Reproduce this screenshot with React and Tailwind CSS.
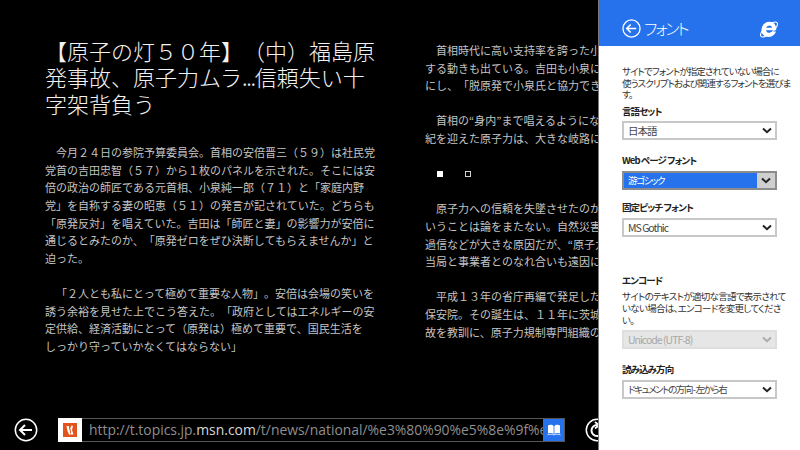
import React from 'react';

const jp = "font-['Noto_Sans_CJK_JP','Noto_Sans',sans-serif]";
// meiryo ui is narrow, proportional kana gets close to it
const palt = "[font-feature-settings:'palt']";

const col1 = [
  ['　今月２４日の参院予算委員会。首相の安倍晋三（５９）は社民党', '党首の吉田忠智（５７）から１枚のパネルを示された。そこには安', '倍の政治の師匠である元首相、小泉純一郎（７１）と「家庭内野', '党」を自称する妻の昭恵（５１）の発言が記されていた。どちらも', '「原発反対」を唱えていた。吉田は「師匠と妻」の影響力が安倍に', '通じるとみたのか、「原発ゼロをぜひ決断してもらえませんか」と', '迫った。'],
  ['　「２人とも私にとって極めて重要な人物」。安倍は会場の笑いを', '誘う余裕を見せた上でこう答えた。「政府としてはエネルギーの安', '定供給、経済活動にとって（原発は）極めて重要で、国民生活を', 'しっかり守っていかなくてはならない」'],
];

const col2Top = [
  ['　首相時代に高い支持率を誇った小泉', 'する動きも出ている。吉田も小泉に面', 'にし、「脱原発で小泉氏と協力できな'],
  ['　首相の“身内”まで唱えるようになっ', '紀を迎えた原子力は、大きな岐路に立'],
];

const col2Bottom = [
  ['　原子力への信頼を失墜させたのか。', 'いうことは論をまたない。自然災害へ', '過信などが大きな原因だが、“原子力', '当局と事業者とのなれ合いも遠因に'],
  ['　平成１３年の省庁再編で発足した原', '保安院。その誕生は、１１年に茨城県', '故を教訓に、原子力規制専門組織の'],
];

function Paragraphs({ items }) {
  return items.map((lines, i) => (
    <div key={i} className="mb-[17.6px]">
      {lines.map((l) => (
        <div key={l} className="whitespace-nowrap">{l}</div>
      ))}
    </div>
  ));
}

function Chevron({ color = '#222' }) {
  return (
    <svg width="10" height="7" viewBox="0 0 10 7">
      <path d="M1 1.5 L5 5.2 L9 1.5" fill="none" stroke={color} strokeWidth="2" />
    </svg>
  );
}

function Select({ value, active, disabled, tight }) {
  const size = tight ? 'text-[9.5px] tracking-[-1.4px]' : 'text-[10.5px] tracking-[-1px]';
  if (active) {
    return (
      <div className={`h-[19px] flex border-2 border-[#8c8c8c] bg-[#2672ec] text-white ${size}`}>
        <div className="flex-1 pl-[4px] leading-[15px]">{value}</div>
        <div className="w-[18px] bg-[#cfcfcf] flex items-center justify-center"><Chevron /></div>
      </div>
    );
  }
  return (
    <div className={`h-[19px] flex items-center justify-between pl-[4px] pr-[3px] border-2 whitespace-nowrap ${size} ${disabled ? 'border-[#dedede] bg-[#e6e6e6] text-[#a8a8a8]' : 'border-[#c8c8c8] bg-white text-[#444]'}`}>
      <span>{value}</span>
      <Chevron color={disabled ? '#aaa' : '#222'} />
    </div>
  );
}

function Label({ children, className = '' }) {
  return <div className={`text-[9.5px] tracking-[-0.9px] leading-[14px] font-bold text-[#222] whitespace-nowrap ${className}`}>{children}</div>;
}

function BackCircle({ stroke = 'white' }) {
  return (
    <svg width="24" height="24" viewBox="0 0 24 24" className="shrink-0">
      <circle cx="12" cy="12" r="10.7" fill="none" stroke={stroke} strokeWidth="1.5" />
      <path d="M6 12 H18 M11 7 L6 12 L11 17" fill="none" stroke={stroke} strokeWidth="2" />
    </svg>
  );
}

export default function App() {
  return (
    <div className={`w-[800px] h-[450px] bg-black flex overflow-hidden [text-spacing-trim:space-all] ${jp}`}>
      <div className="w-[598px] flex flex-col">
        <div className="flex-1 flex pt-[37px] pl-[45px] overflow-hidden min-h-0">
          <div className="w-[330px] shrink-0">
            <h1 className="text-[22px] leading-[26.4px] text-[#f2f2f2] font-light whitespace-nowrap mb-[28px]">
              <div>【原子の灯５０年】（中）福島原</div>
              <div>発事故、原子力ムラ<span className="tracking-[-1.2px]">...</span>信頼失い十</div>
              <div>字架背負う</div>
            </h1>
            <div className="text-[11px] leading-[17.6px] text-[#c4c4c4]">
              <Paragraphs items={col1} />
            </div>
          </div>
          <div className="ml-[50px] w-[173px] shrink-0 overflow-hidden pt-[5px] text-[11px] leading-[17.6px] text-[#c4c4c4]">
            <Paragraphs items={col2Top} />
            <div className="h-[17.6px] flex items-center pl-[12px] mb-[17.6px]">
              <div className="w-[6px] h-[6px] bg-white" />
              <div className="w-[6px] h-[6px] ml-[22px] border border-[#d0d0d0]" />
            </div>
            <Paragraphs items={col2Bottom} />
          </div>
        </div>
        <div className="h-[32px] mb-[4px] pl-[14px] flex items-center overflow-hidden">
          <BackCircle />
          <div className="ml-[20px] w-[507px] h-[24px] flex items-center border border-[#555] bg-black shrink-0">
            <div className="w-[24px] h-[24px] -ml-px bg-white flex items-center justify-center shrink-0">
              <svg width="14" height="14" viewBox="0 0 14 14">
                <rect width="14" height="14" fill="#e2521d" />
                <path d="M3.5 3 L5.8 3 L6.3 7 L8.5 2.5 L10 3 L9 7 L10.5 11.5 L6 11.5 L4.5 8 Z" fill="white" />
                <path d="M7 5.5 L7.6 10.5" stroke="#e2521d" strokeWidth="1" />
              </svg>
            </div>
            <div className="flex-1 min-w-0 overflow-hidden whitespace-nowrap pl-[7px] text-[13.9px] text-[#8f8f8f] font-['Open_Sans',sans-serif]">
              http://t.topics.jp.<span className="text-[#d8d8d8]">msn.com</span>/t/news/national/%e3%80%90%e5%8e%9f%e
            </div>
            <div className="w-[21px] h-[22px] bg-[#2672ec] flex items-center justify-center shrink-0">
              <svg width="14" height="12" viewBox="0 0 14 12">
                <path d="M1 1.5 C3 0.5 5.5 0.7 6.6 2 V10 C5.5 9 3 8.8 1 9.6 Z M13 1.5 C11 0.5 8.5 0.7 7.4 2 V10 C8.5 9 11 8.8 13 9.6 Z" fill="white" />
                <path d="M0.5 10.8 C3 10 5.5 10 7 11 C8.5 10 11 10 13.5 10.8" fill="none" stroke="white" strokeWidth="0.8" />
              </svg>
            </div>
          </div>
          <div className="ml-[20px] shrink-0">
            <svg width="24" height="24" viewBox="0 0 24 24">
              <circle cx="12" cy="12" r="10.7" fill="none" stroke="white" strokeWidth="1.5" />
              <path d="M12 7 A5.5 5.5 0 1 0 17.5 12.5" fill="none" stroke="white" strokeWidth="2" />
              <path d="M10 4 L14 7.2 L10 10.5" fill="none" stroke="white" strokeWidth="1.8" />
            </svg>
          </div>
        </div>
      </div>

      <div className={`w-[202px] shrink-0 flex flex-col bg-white border-l border-[#7a7a7a] ${palt}`}>
        <div className="h-[46px] bg-[#2672ec] flex items-center pl-[23px] pr-[21px] shrink-0">
          <div className="w-[19px] h-[19px] mt-[11px]">
            <svg width="19" height="19" viewBox="0 0 24 24">
              <circle cx="12" cy="12" r="10.8" fill="none" stroke="white" strokeWidth="1.7" />
              <path d="M6 12 H18 M11 7 L6 12 L11 17" fill="none" stroke="white" strokeWidth="2" />
            </svg>
          </div>
          <div className="ml-[3px] mt-[10px] text-[16px] tracking-[-2.2px] leading-[20px] text-white font-light flex-1">フォント</div>
          <div className="mt-[12px]">
            <svg width="20" height="21" viewBox="0 0 20 21">
              <ellipse cx="10" cy="10.5" rx="10.5" ry="4" transform="rotate(-40 10 10.5)" fill="none" stroke="white" strokeWidth="1.1" />
              <path d="M2.5 11.5 C2.5 6 6 2.8 10.5 2.8 C15 2.8 17.5 6.2 17.2 11.2 H7 C7.3 14 11.5 14.5 13.5 12.6 H17 C15.5 16.8 12.2 18 10 18 C5.8 18 2.5 15.5 2.5 11.5 Z M7 8.8 H13 C12.8 5.8 7.4 5.8 7 8.8 Z" fill="white" fillRule="evenodd" />
            </svg>
          </div>
        </div>
        <div className="flex-1 pl-[23px] pr-[23px] pt-[20px] text-[#333]">
          <p className="text-[9.5px] tracking-[-0.9px] leading-[11.7px] whitespace-nowrap">
            サイトでフォントが指定されていない場合に<br />使うスクリプトおよび関連するフォントを選びま<br />す。
          </p>
          <Label className="mt-[3px] mb-[3px]">言語セット</Label>
          <Select value="日本語" />
          <Label className="mt-[13px] mb-[4px]">Web ページ フォント</Label>
          <Select value="游ゴシック" active tight />
          <Label className="mt-[10px] mb-[4px]">固定ピッチ フォント</Label>
          <Select value="MS Gothic" />
          <Label className="mt-[36px] mb-[3px]">エンコード</Label>
          <p className="text-[9.5px] tracking-[-0.7px] leading-[12px] whitespace-nowrap">
            サイトのテキストが適切な言語で表示されて<br />いない場合は、エンコードを変更してくださ<br />い。
          </p>
          <div className="mt-[4px]"><Select value="Unicode (UTF-8)" disabled /></div>
          <Label className="mt-[13px] mb-[4px]">読み込み方向</Label>
          <Select value="ドキュメントの方向 - 左から右" tight />
        </div>
      </div>
    </div>
  );
}
